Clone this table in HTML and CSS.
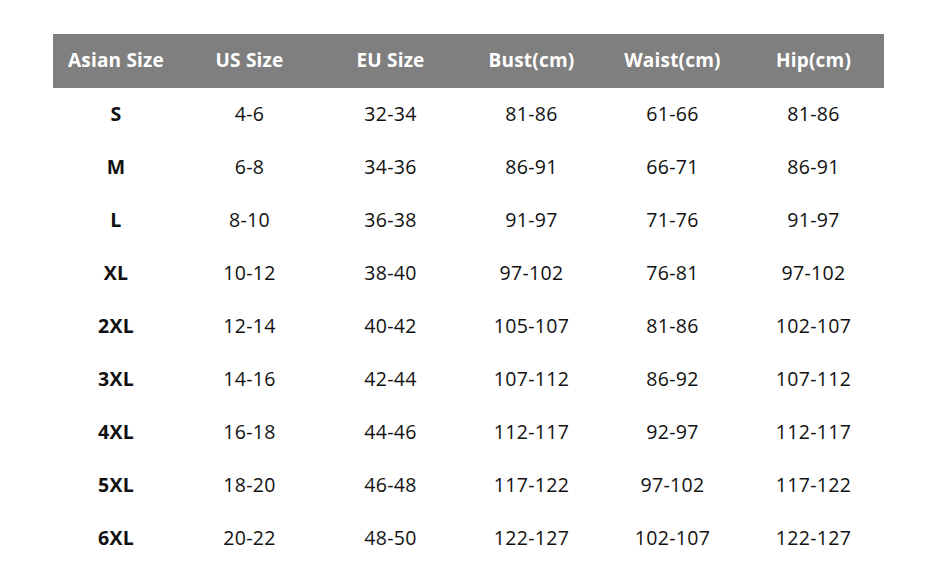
FILE: index.html
```html
<!DOCTYPE html>
<html>
<head>
<meta charset="utf-8">
<link rel="stylesheet" href="styles.css">
</head>
<body>
<div class="chart">
  <div class="row head">
    <div>Asian Size</div><div>US Size</div><div>EU Size</div><div>Bust(cm)</div><div>Waist(cm)</div><div>Hip(cm)</div>
  </div>
  <div class="row"><div class="sz">S</div><div>4-6</div><div>32-34</div><div>81-86</div><div>61-66</div><div>81-86</div></div>
  <div class="row"><div class="sz">M</div><div>6-8</div><div>34-36</div><div>86-91</div><div>66-71</div><div>86-91</div></div>
  <div class="row"><div class="sz">L</div><div>8-10</div><div>36-38</div><div>91-97</div><div>71-76</div><div>91-97</div></div>
  <div class="row"><div class="sz">XL</div><div>10-12</div><div>38-40</div><div>97-102</div><div>76-81</div><div>97-102</div></div>
  <div class="row"><div class="sz">2XL</div><div>12-14</div><div>40-42</div><div>105-107</div><div>81-86</div><div>102-107</div></div>
  <div class="row"><div class="sz">3XL</div><div>14-16</div><div>42-44</div><div>107-112</div><div>86-92</div><div>107-112</div></div>
  <div class="row"><div class="sz">4XL</div><div>16-18</div><div>44-46</div><div>112-117</div><div>92-97</div><div>112-117</div></div>
  <div class="row"><div class="sz">5XL</div><div>18-20</div><div>46-48</div><div>117-122</div><div>97-102</div><div>117-122</div></div>
  <div class="row"><div class="sz">6XL</div><div>20-22</div><div>48-50</div><div>122-127</div><div>102-107</div><div>122-127</div></div>
</div>
</body>
</html>
```

FILE: styles.css
```css
html, body {
  margin: 0;
  padding: 0;
  background: #ffffff;
}
body {
  font-family: "Open Sans", "Noto Sans", sans-serif;
  color: #111111;
}
.chart {
  width: 831px;
  padding: 34px 0 0 53px;
}
.row {
  box-sizing: border-box;
  display: grid;
  grid-template-columns: 126px repeat(5, 141px);
  height: 53px;
  padding-bottom: 3px;
  align-items: center;
  font-size: 19.5px;
}
.row > div {
  text-align: center;
  letter-spacing: 0.3px;
}
.head {
  height: 54px;
  padding-bottom: 2px;
  background: #7f7f7f;
  color: #ffffff;
  font-weight: 700;
  font-size: 19px;
}
.head > div {
  letter-spacing: 0.2px;
}
.sz {
  font-weight: 700;
}
```
